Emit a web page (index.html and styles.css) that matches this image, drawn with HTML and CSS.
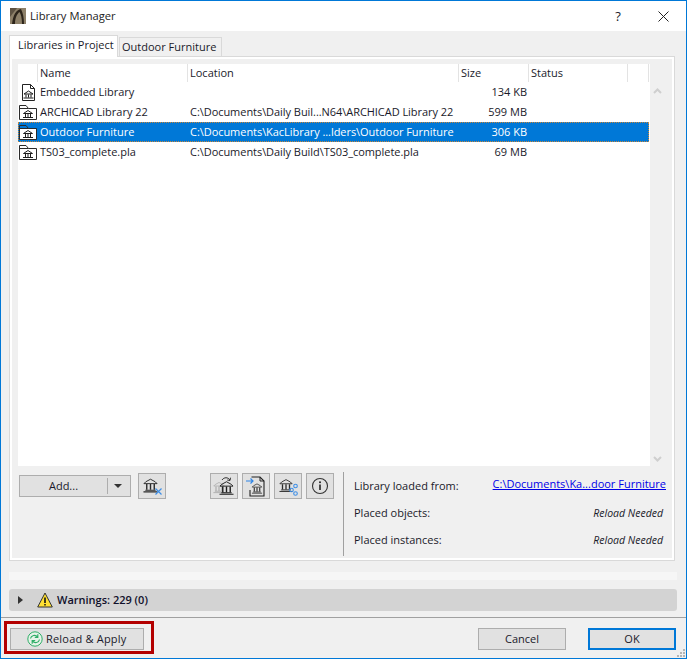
FILE: index.html
```html
<!DOCTYPE html>
<html lang="en">
<head>
<meta charset="utf-8">
<title>Library Manager</title>
<link rel="stylesheet" href="styles.css">
</head>
<body>
<svg class="defs" width="0" height="0">
  <symbol id="bank" viewBox="0 0 16 15">
    <path d="M1 5.500 3 3.500 8 .8l5 2.700 2 2z" fill="none" stroke="currentColor" stroke-width="1"/>
    <path d="M4 6v6M8 6v6M12 6v6" stroke="currentColor" stroke-width="1.500" fill="none"/>
    <path d="M2.500 12.500h11M.5 14.300h15" stroke="currentColor" stroke-width="1.100" fill="none"/>
  </symbol>
  <symbol id="folder" viewBox="0 0 18 15">
    <path d="M.5 14.500V.5h6.500l2.500 3h8v11z" fill="none" stroke="#2a2a2a" stroke-width="1"/>
    <path d="M.5 3.500h9" stroke="#2a2a2a" stroke-width="1" fill="none"/>
    <rect x="1" y="4" width="16" height="10" fill="#fff"/>
    <g transform="translate(4 5)" stroke="#1c1c1c" stroke-width="1" fill="none">
      <path d="M.5 3.500 5 .5l4.500 3z"/>
      <path d="M2.500 4v3M5 4v3M7.500 4v3"/>
      <path d="M0 7.500h10"/>
    </g>
  </symbol>
</svg>
<div class="window">
  <header class="titlebar">
    <svg class="app-icon" viewBox="0 0 16 16"><rect width="16" height="16" fill="#8d8069"/><path d="M2 16C3 7 6 2 11 1c2 4 3 9 3 15h-2C12 10 11 6 9.500 4 7 6 5 10 5 16z" fill="#2c241a"/><path d="M0 0h7L0 9z" fill="#5d5242"/></svg>
    <span class="title">Library Manager</span>
    <span class="help">?</span>
    <svg class="close" viewBox="0 0 11 11"><path d="M.5.5l10 10M10.500.5l-10 10" stroke="#222" stroke-width="1" fill="none"/></svg>
  </header>

  <main class="content">
    <nav class="tabs">
      <div class="tab active">Libraries in Project</div>
      <div class="tab">Outdoor Furniture</div>
    </nav>

    <section class="panel">
      <div class="list-wrap">
        <div class="table">
          <div class="row head">
            <div class="c-icon"></div>
            <div class="c-name">Name</div>
            <div class="c-loc">Location</div>
            <div class="c-size">Size</div>
            <div class="c-status">Status</div>
            <div class="c-end"></div>
          </div>
          <div class="row">
            <div class="c-icon">
              <svg class="doc-ic" viewBox="0 0 13 17">
                <path d="M.5.500h8l4 4v12H.5z" fill="#fff" stroke="#222"/>
                <path d="M8.500.500v4h4" fill="none" stroke="#222"/>
                <g transform="translate(1.500 6.500)" stroke="#1c1c1c" stroke-width="1" fill="none">
                  <path d="M.5 3.500 5 .5l4.500 3z"/>
                  <path d="M2.500 4v3M5 4v3M7.500 4v3"/>
                  <path d="M0 7.500h10"/>
                </g>
              </svg>
            </div>
            <div class="c-name">Embedded Library</div>
            <div class="c-loc"></div>
            <div class="c-size num">134 KB</div>
            <div class="c-status"></div>
          </div>
          <div class="row">
            <div class="c-icon"><svg class="fold-ic"><use href="#folder"/></svg></div>
            <div class="c-name">ARCHICAD Library 22</div>
            <div class="c-loc">C:\Documents\Daily Buil...N64\ARCHICAD Library 22</div>
            <div class="c-size num">599 MB</div>
            <div class="c-status"></div>
          </div>
          <div class="row selected">
            <div class="c-icon"><svg class="fold-ic"><use href="#folder"/></svg></div>
            <div class="c-name">Outdoor Furniture</div>
            <div class="c-loc">C:\Documents\KacLibrary ...lders\Outdoor Furniture</div>
            <div class="c-size num">306 KB</div>
            <div class="c-status"></div>
          </div>
          <div class="row">
            <div class="c-icon"><svg class="fold-ic"><use href="#folder"/></svg></div>
            <div class="c-name">TS03_complete.pla</div>
            <div class="c-loc">C:\Documents\Daily Build\TS03_complete.pla</div>
            <div class="c-size num">69 MB</div>
            <div class="c-status"></div>
          </div>
        </div>
        <div class="scrollbar">
          <svg class="chev" viewBox="0 0 9 6"><path d="M1 5l3.500-3.500L8 5" fill="none" stroke="#cfcfcf" stroke-width="2"/></svg>
          <svg class="chev" viewBox="0 0 9 6"><path d="M1 1l3.500 3.500L8 1" fill="none" stroke="#cfcfcf" stroke-width="2"/></svg>
        </div>
      </div>

      <div class="lower">
        <div class="tools">
          <div class="add-btn">
            <span class="add-label">Add...</span>
            <span class="add-arrow"></span>
          </div>
          <button class="icon-btn remove-btn">
            <svg viewBox="0 0 22 22"><use href="#bank" x="2" y="3" width="15" height="15" color="#2a2a2a"/><path d="M14.500 13.500l6 6M20.500 13.500l-6 6" stroke="#3d8ee6" stroke-width="1.200" fill="none"/></svg>
          </button>
          <div class="icon-group">
            <button class="icon-btn">
              <svg viewBox="0 0 22 22"><use href="#bank" x="0" y="6" width="12" height="13" color="#a8a8a8"/><use href="#bank" x="6" y="6" width="15" height="14" color="#1d1d1d"/><path d="M9 5c2-3 6-3 8 0M17 5.500l.5-2.800M17 5.500l-2.800-.5" stroke="#333" stroke-width="1" fill="none"/></svg>
            </button>
            <button class="icon-btn">
              <svg viewBox="0 0 22 22"><path d="M6.500 2h8.500l4 4v15H5v-6" fill="none" stroke="#222" stroke-width="1.100"/><path d="M15 2v4h4" fill="none" stroke="#222"/><use href="#bank" x="6.500" y="8" width="11" height="11" color="#1d1d1d"/><path d="M1 6h7M5.500 3.500 8 6 5.500 8.500" stroke="#2f86e8" stroke-width="1.200" fill="none"/></svg>
            </button>
            <button class="icon-btn">
              <svg viewBox="0 0 22 22"><use href="#bank" x="2" y="3" width="14" height="15" color="#2a2a2a"/><g fill="none" stroke="#3d8ee6" stroke-width="1.100"><circle cx="18.500" cy="11" r="1.800"/><circle cx="14.500" cy="15" r="1.800"/><circle cx="18.500" cy="18.500" r="1.800"/></g></svg>
            </button>
            <button class="icon-btn">
              <svg viewBox="0 0 22 22"><circle cx="11" cy="11" r="7.500" fill="none" stroke="#333" stroke-width="1.100"/><circle cx="11" cy="7.300" r="1" fill="#222"/><path d="M11 9.500v5.500" stroke="#222" stroke-width="1.600"/></svg>
            </button>
          </div>
        </div>
        <div class="info">
          <div class="info-row first"><span>Library loaded from:</span><a class="link">C:\Documents\Ka...door Furniture</a></div>
          <div class="info-row"><span>Placed objects:</span><em>Reload Needed</em></div>
          <div class="info-row"><span>Placed instances:</span><em>Reload Needed</em></div>
        </div>
      </div>
    </section>

    <div class="strip"></div>

    <div class="warnings">
      <span class="tri"></span>
      <svg class="warn-ic" viewBox="0 0 16 16"><path d="M8 1 15.300 15H.7z" fill="#ffe033" stroke="#333" stroke-width="1"/><path d="M8 5.500v5.500" stroke="#111" stroke-width="1.600"/><path d="M8 12v1.500" stroke="#111" stroke-width="1.500"/></svg>
      <span class="warn-text">Warnings: 229 (0)</span>
    </div>
  </main>

  <footer class="footer">
    <button class="btn reload">
      <svg viewBox="0 0 16 16"><circle cx="8" cy="8" r="7.200" fill="#e6f3e9" stroke="#2fae68" stroke-width="1"/><path d="M3.500 7.500c.6-3.200 5-4.300 7-1.500M10.800 3.300v3H7.800M12.500 8.500c-.6 3.200-5 4.300-7 1.500M5.200 12.700v-3h3" fill="none" stroke="#2fae68" stroke-width="1.200"/></svg>
      <span class="reload-text">Reload &amp; Apply</span>
    </button>
    <div class="footer-right">
      <button class="btn cancel">Cancel</button>
      <button class="btn ok">OK</button>
    </div>
    <div class="highlight"></div>
    <svg class="grip" viewBox="0 0 8 8"><path d="M6 0h2v2H6zM3 3h2v2H3zM6 3h2v2H6zM0 6h2v2H0zM3 6h2v2H3zM6 6h2v2H6z" fill="#b5b5b5"/></svg>
  </footer>
</div>
</body>
</html>
```
FILE: styles.css
```css
* { box-sizing: border-box; }
html, body { margin: 0; padding: 0; }
body { font: 11px/14px "Open Sans", "Noto Sans", sans-serif; color: #1a1a2a; }
.defs { position: absolute; }

.window {
  width: 687px;
  height: 659px;
  border: 1px solid #0078d7;
  background: #f0f0f0;
  display: flex;
  flex-direction: column;
}

.titlebar {
  height: 30px;
  background: #fff;
  display: flex;
  align-items: center;
  padding-left: 9px;
  flex: none;
}
.app-icon { width: 16px; height: 16px; margin-right: 4px; }
.title { font-size: 11.200px; color: #222; flex: 1; }
.help { font-size: 13px; width: 14px; text-align: center; margin-right: 33px; }
.close { width: 11px; height: 11px; margin-right: 17px; }

.content { padding: 4px 8px 0; flex: none; }
.tabs { display: flex; align-items: flex-end; height: 21px; }
.tab {
  height: 19px;
  padding: 0 2px;
  width: 103px;
  margin-left: 1px;
  background: #f0f0f0;
  border: 1px solid #d9d9d9;
  border-bottom: 0;
  line-height: 18px;
  white-space: nowrap;
}
.tab.active {
  height: 22px;
  width: 109px;
  margin: 0 0 -1px;
  background: #fff;
  line-height: 18px;
  padding: 0 8px;
  position: relative;
  z-index: 1;
}

.panel {
  width: 666px;
  height: 505px;
  border: 1px solid #d9d9d9;
  box-shadow: inset 0 0 0 2px #fff;
  background: #f0f0f0;
  padding: 7px 8px 0;
}

.list-wrap { display: flex; height: 402px; }
.table { width: 632px; height: 402px; background: #fff; flex: none; }
.row { display: flex; width: 631px; height: 20px; line-height: 20px; white-space: nowrap; }
.row > div { padding-left: 2px; overflow: hidden; }
.row .c-icon { width: 20px; display: flex; align-items: center; padding-left: 1px; }
.c-name { width: 150px; }
.c-loc { width: 271px; }
.row:not(.head) .c-loc { letter-spacing: -.05px; }
.c-size { width: 70px; }
.c-status { width: 99px; }
.c-end { width: 21px; }
.row .num { text-align: right; padding-right: 2px; }
.row.head { height: 18px; line-height: 17px; background: #fff; }
.head > div { box-shadow: -1px 0 0 #e3e3e3 inset; }
.selected { background: #0078d7; color: #fff; outline: 1px dotted #c9873a; outline-offset: -1px; }
.doc-ic { width: 13px; height: 17px; margin-left: 3px; flex: none; }
.fold-ic { width: 18px; height: 15px; flex: none; }

.scrollbar {
  width: 18px;
  background: #f0f0f0;
  margin-top: 18px;
  height: 384px;
  display: flex;
  flex-direction: column;
  justify-content: space-between;
  align-items: center;
  padding: 6px 3px 4px 0;
  flex: none;
}
.chev { width: 9px; height: 6px; }

.lower { display: flex; height: 84px; margin-top: 6px; }
.tools { width: 325px; display: flex; align-items: flex-start; flex: none; padding-left: 1px; padding-top: 1px; }
.add-btn {
  width: 112px;
  height: 22px;
  margin-top: 2px;
  background: #e1e1e1;
  border: 1px solid #adadad;
  display: flex;
  align-items: center;
}
.add-label { width: 88px; height: 16px; line-height: 16px; text-align: center; border-right: 1px solid #adadad; }
.add-arrow {
  width: 0; height: 0;
  margin-left: 6px;
  border-left: 4px solid transparent;
  border-right: 4px solid transparent;
  border-top: 4px solid #333;
}
.icon-btn {
  width: 28px;
  height: 26px;
  padding: 0;
  background: #e1e1e1;
  border: 1px solid #adadad;
  display: flex;
  align-items: center;
  justify-content: center;
}
.icon-btn svg { width: 22px; height: 22px; }
.remove-btn { margin-left: 7px; }
.icon-group { display: flex; gap: 4px; margin-left: 44px; }

.info {
  width: 323px;
  flex: none;
  border-left: 1px solid #a0a0a0;
  padding: 0 0 0 10px;
  height: 84px;
}
.info-row { display: flex; justify-content: space-between; align-items: center; height: 27px; }
.info-row em { font-size: 10.500px; font-style: italic; margin-right: 3px; }
.link { color: #0000e6; text-decoration: underline; position: relative; top: -2px; }

.strip { height: 8px; margin-top: 11px; background: #f6f6f6; width: 668px; }
.warnings {
  width: 668px;
  height: 22px;
  margin-top: 9px;
  background: #d3d3d3;
  border-radius: 3px;
  display: flex;
  align-items: center;
  padding-left: 9px;
}
.tri {
  width: 0; height: 0;
  border-top: 4px solid transparent;
  border-bottom: 4px solid transparent;
  border-left: 5px solid #333;
  margin-right: 14px;
}
.warn-ic { width: 16px; height: 16px; margin-right: 4px; }
.warn-text { font-weight: 600; color: #10102a; }

.footer {
  position: relative;
  flex: 1;
  margin-top: 6px;
  border-top: 1px solid #a0a0a0;
  padding: 10px 10px 0 9px;
  display: flex;
  justify-content: space-between;
}
.btn {
  height: 22px;
  padding: 0;
  background: #e1e1e1;
  border: 1px solid #adadad;
  font: inherit;
  color: inherit;
}
.reload {
  width: 134px;
  display: flex;
  align-items: center;
  gap: 3px;
  padding-left: 16px;
}
.reload svg { width: 16px; height: 16px; }
.reload-text { letter-spacing: .2px; }
.footer-right { display: flex; gap: 22px; }
.cancel, .ok { width: 88px; }
.ok { border: 2px solid #0078d7; }
.highlight {
  position: absolute;
  left: 3px;
  top: 3px;
  width: 150px;
  height: 33px;
  border: 3px solid #b30000;
}
.grip { position: absolute; right: 1px; bottom: 1px; width: 8px; height: 8px; }
```
